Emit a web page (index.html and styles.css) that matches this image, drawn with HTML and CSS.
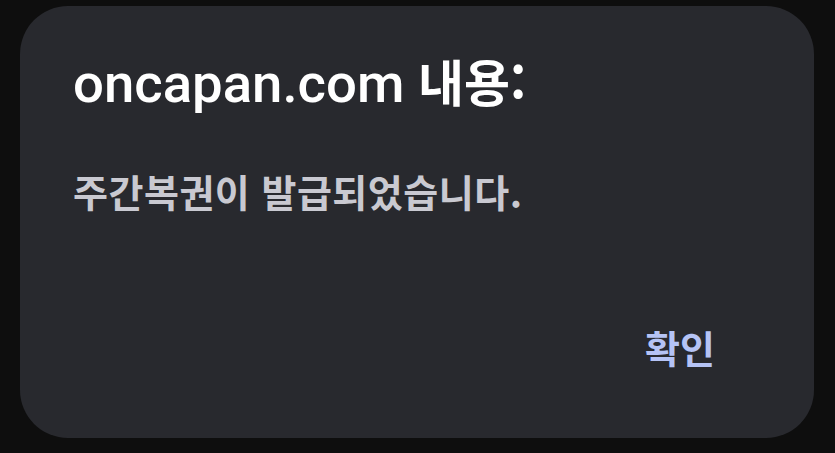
FILE: index.html
```html
<!DOCTYPE html>
<html lang="ko">
<head>
<meta charset="utf-8">
<link rel="stylesheet" href="styles.css">
</head>
<body>
<div class="dialog">
  <h1 class="title">oncapan.com <span class="ko">내용:</span></h1>
  <p class="message">주간복권이 발급되었습니다.</p>
  <div class="actions">
    <button class="ok">확인</button>
  </div>
</div>
</body>
</html>
```
FILE: styles.css
```css
html, body {
  margin: 0;
  padding: 0;
  background: #0e0e0e;
  width: 835px;
  height: 453px;
  overflow: hidden;
}
.dialog {
  box-sizing: border-box;
  margin: 6px 21px 0 20px;
  width: 794px;
  height: 432px;
  background: #28292e;
  border-radius: 48px;
  padding: 46px 52px 0 53px;
  display: flex;
  flex-direction: column;
}
.title {
  margin: 0;
  font-family: Roboto, "Noto Sans CJK KR", sans-serif;
  font-weight: 500;
  font-size: 54.5px;
  line-height: 56px;
  color: #ffffff;
}
.title .ko {
  font-family: "Noto Sans CJK KR", sans-serif;
  font-size: 50px;
  font-weight: 700;
}
.message {
  margin: 55px 0 0 0;
  font-family: "Noto Sans CJK KR", sans-serif;
  font-weight: 700;
  font-size: 38px;
  letter-spacing: 0.5px;
  line-height: 50px;
  color: #c9c9d1;
}
.actions {
  display: flex;
  justify-content: flex-end;
  margin-top: 106px;
  padding-right: 47px;
}
.ok {
  background: none;
  border: none;
  padding: 0;
  font-family: "Noto Sans CJK KR", sans-serif;
  font-weight: 700;
  font-size: 38px;
  line-height: 50px;
  color: #b5c3f5;
}
```
